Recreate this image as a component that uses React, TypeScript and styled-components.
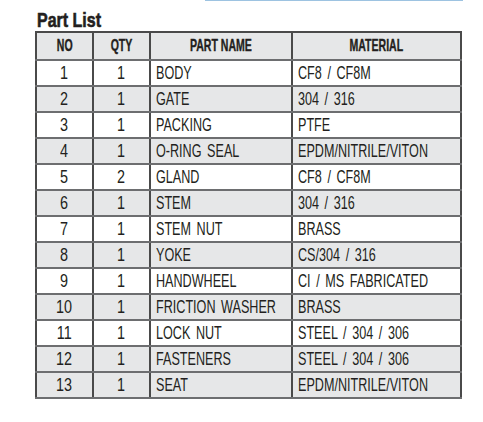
import styled, { createGlobalStyle } from "styled-components";

const GlobalStyle = createGlobalStyle`
  body {
    margin: 0;
    background: #ffffff;
    font-family: "Liberation Sans", Arial, sans-serif;
    color: #231f20;
  }
`;

const Page = styled.div`
  width: 483px;
  height: 422px;
  display: flex;
  flex-direction: column;
`;

const TopRule = styled.div`
  margin-left: 205px;
  width: 258px;
  height: 1px;
  background: #9dc3e1;
`;

const Title = styled.h2`
  margin: 8px 0 0 37px;
  height: 22px;
  line-height: 22px;
  font-size: 20px;
  font-weight: 700;
  color: #231f20;
  -webkit-text-stroke: 0.6px #231f20;
`;

// condensed face: no narrow font installed, so squeeze the glyphs
const Squeeze = styled.span<{ $x: number; $origin?: string }>`
  display: inline-block;
  white-space: nowrap;
  transform: scaleX(${(p) => p.$x});
  transform-origin: ${(p) => p.$origin ?? "left"} center;
`;

const Table = styled.table`
  margin-left: 35px;
  width: 425px;
  border-collapse: collapse;
  table-layout: fixed;
  border: 2px solid #4a4a4a;
`;

const HeadCell = styled.th<{ $w: number }>`
  width: ${(p) => p.$w}px;
  height: 26px;
  padding: 0;
  background: #e6e7e8;
  border-right: 2px solid #4a4a4a;
  border-bottom: 2px solid #6d6e70;
  font-size: 17px;
  font-weight: 700;
  -webkit-text-stroke: 0.4px #231f20;
  text-align: center;
  vertical-align: middle;
  white-space: nowrap;
  overflow: visible;
`;

const Row = styled.tr<{ $shade: boolean }>`
  background: ${(p) => (p.$shade ? "#e6e7e8" : "#ffffff")};
`;

const Cell = styled.td<{ $center?: boolean }>`
  height: 24px;
  padding: 0 0 0 ${(p) => (p.$center ? 0 : 5)}px;
  border-right: 2px solid #4a4a4a;
  border-bottom: 2px solid #6d6e70;
  font-size: 18px;
  line-height: 20px;
  word-spacing: 3px;
  text-align: ${(p) => (p.$center ? "center" : "left")};
  vertical-align: middle;
  white-space: nowrap;
  overflow: visible;
`;

const parts: [number, number, string, string][] = [
  [1, 1, "BODY", "CF8 / CF8M"],
  [2, 1, "GATE", "304 / 316"],
  [3, 1, "PACKING", "PTFE"],
  [4, 1, "O-RING SEAL", "EPDM/NITRILE/VITON"],
  [5, 2, "GLAND", "CF8 / CF8M"],
  [6, 1, "STEM", "304 / 316"],
  [7, 1, "STEM NUT", "BRASS"],
  [8, 1, "YOKE", "CS/304 / 316"],
  [9, 1, "HANDWHEEL", "CI / MS FABRICATED"],
  [10, 1, "FRICTION WASHER", "BRASS"],
  [11, 1, "LOCK NUT", "STEEL / 304 / 306"],
  [12, 1, "FASTENERS", "STEEL / 304 / 306"],
  [13, 1, "SEAT", "EPDM/NITRILE/VITON"],
];

const headers: [string, number][] = [
  ["NO", 55],
  ["QTY", 55],
  ["PART NAME", 140],
  ["MATERIAL", 167],
];

export default function App() {
  return (
    <Page>
      <GlobalStyle />
      <TopRule />
      <Title>
        <Squeeze $x={0.8}>Part List</Squeeze>
      </Title>
      <Table>
        <thead>
          <tr>
            {headers.map(([label, w]) => (
              <HeadCell key={label} $w={w}>
                <Squeeze $x={0.62} $origin="center">
                  {label}
                </Squeeze>
              </HeadCell>
            ))}
          </tr>
        </thead>
        <tbody>
          {parts.map(([no, qty, name, material]) => (
            <Row key={no} $shade={no % 2 === 0 || no === 13}>
              <Cell $center>
                <Squeeze $x={0.8} $origin="center">{no}</Squeeze>
              </Cell>
              <Cell $center>
                <Squeeze $x={0.8} $origin="center">{qty}</Squeeze>
              </Cell>
              <Cell>
                <Squeeze $x={0.7}>{name}</Squeeze>
              </Cell>
              <Cell>
                <Squeeze $x={0.7}>{material}</Squeeze>
              </Cell>
            </Row>
          ))}
        </tbody>
      </Table>
    </Page>
  );
}
